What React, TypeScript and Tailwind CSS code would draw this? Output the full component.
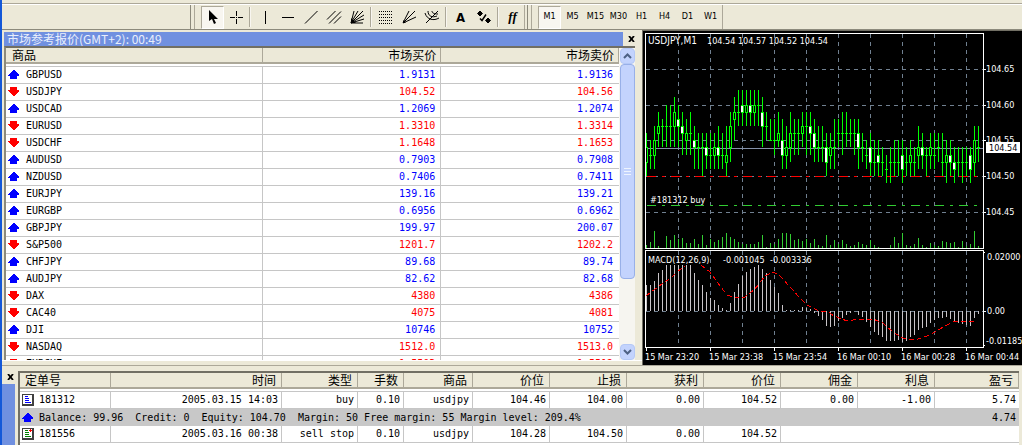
import type { ReactNode } from "react";

type Quote = { symbol: string; bid: string; ask: string; up: boolean };

const quotes: Quote[] = [
  { symbol: "GBPUSD", bid: "1.9131", ask: "1.9136", up: true },
  { symbol: "USDJPY", bid: "104.52", ask: "104.56", up: false },
  { symbol: "USDCAD", bid: "1.2069", ask: "1.2074", up: true },
  { symbol: "EURUSD", bid: "1.3310", ask: "1.3314", up: false },
  { symbol: "USDCHF", bid: "1.1648", ask: "1.1653", up: false },
  { symbol: "AUDUSD", bid: "0.7903", ask: "0.7908", up: true },
  { symbol: "NZDUSD", bid: "0.7406", ask: "0.7411", up: true },
  { symbol: "EURJPY", bid: "139.16", ask: "139.21", up: true },
  { symbol: "EURGBP", bid: "0.6956", ask: "0.6962", up: true },
  { symbol: "GBPJPY", bid: "199.97", ask: "200.07", up: true },
  { symbol: "S&P500", bid: "1201.7", ask: "1202.2", up: false },
  { symbol: "CHFJPY", bid: "89.68", ask: "89.74", up: true },
  { symbol: "AUDJPY", bid: "82.62", ask: "82.68", up: true },
  { symbol: "DAX", bid: "4380", ask: "4386", up: false },
  { symbol: "CAC40", bid: "4075", ask: "4081", up: false },
  { symbol: "DJI", bid: "10746", ask: "10752", up: true },
  { symbol: "NASDAQ", bid: "1512.0", ask: "1513.0", up: false },
  { symbol: "EURCHF", bid: "1.5503", ask: "1.5512", up: false },
];

const orderHeads = ["定单号", "时间", "类型", "手数", "商品", "价位", "止损", "获利", "价位", "佣金", "利息", "盈亏"];

const orders = [
  ["181312", "2005.03.15 14:03", "buy", "0.10", "usdjpy", "104.46", "104.00", "0.00", "104.52", "0.00", "-1.00", "5.74"],
  ["181556", "2005.03.16 00:38", "sell stop", "0.10", "usdjpy", "104.28", "104.50", "0.00", "104.52", "", "", ""],
];

// [high, low, body top, body bottom, falling] in points above 104.00
const candles: [number, number, number, number, number?][] = [
  [56, 50, 54, 52], [55, 51, 53, 53], [57, 51, 55, 53], [59, 54, 57, 56], [58, 54, 57, 57], [60, 54, 57, 57],
  [60, 54, 57, 57], [61, 54, 59, 57], [60, 54, 58, 57, 1], [59, 53, 57, 56, 1], [58, 53, 56, 55], [59, 53, 56, 56],
  [57, 51, 55, 54, 1], [56, 51, 54, 54], [56, 50, 54, 54], [56, 51, 54, 53, 1], [56, 51, 53, 53], [56, 51, 54, 53],
  [57, 51, 54, 53, 1], [56, 51, 53, 53], [57, 50, 53, 52], [59, 52, 57, 54], [61, 55, 59, 58], [62, 57, 59, 59],
  [62, 57, 60, 59, 1], [62, 57, 60, 59], [62, 57, 60, 59, 1], [62, 57, 60, 59], [62, 57, 60, 60], [61, 54, 59, 57, 1],
  [59, 55, 57, 57], [58, 55, 55, 55], [58, 53, 55, 55], [59, 54, 56, 55], [58, 51, 55, 53, 1], [57, 51, 54, 53],
  [59, 52, 56, 54], [58, 53, 56, 56], [58, 53, 56, 56], [59, 54, 57, 56], [59, 53, 57, 57], [59, 53, 57, 56, 1],
  [58, 52, 56, 54, 1], [57, 52, 54, 54], [57, 52, 54, 54], [56, 50, 54, 52, 1], [56, 51, 54, 53], [58, 51, 54, 54],
  [58, 54, 56, 56], [59, 53, 56, 56], [59, 54, 56, 56], [58, 54, 56, 56], [58, 53, 56, 56], [58, 51, 56, 54, 1],
  [56, 52, 54, 54], [55, 51, 53, 53], [56, 50, 54, 52, 1], [55, 50, 52, 52], [55, 50, 53, 52, 1], [54, 50, 52, 52],
  [53, 49, 51, 51], [54, 49, 52, 52], [55, 50, 52, 52], [55, 50, 52, 52], [55, 49, 53, 51, 1], [54, 50, 52, 52],
  [55, 50, 53, 52], [54, 50, 52, 52], [57, 51, 54, 53], [56, 51, 54, 53, 1], [54, 50, 53, 53], [56, 51, 54, 53],
  [56, 51, 53, 53], [56, 52, 54, 54], [56, 50, 52, 52], [55, 49, 53, 52], [55, 50, 53, 52, 1], [54, 49, 52, 51, 1],
  [54, 50, 52, 52], [54, 49, 52, 52], [54, 50, 52, 52], [54, 49, 53, 51, 1], [57, 50, 55, 52], [57, 52, 54, 54],
];

const volumes = [
  3, 6, 17, 2, 0, 12, 8, 13, 9, 10, 5, 5, 9, 4, 13, 3, 9, 6, 8, 11, 15, 11, 9, 6, 4, 4, 4, 4, 6, 13, 1, 5, 4, 9, 15,
  15, 14, 8, 9, 7, 9, 5, 9, 3, 2, 13, 3, 8, 4, 8, 4, 2, 3, 6, 4, 3, 8, 3, 1, 0, 0, 3, 11, 5, 15, 3, 2, 4, 10, 3, 1,
  5, 3, 2, 7, 6, 5, 6, 1, 7, 2, 4, 17, 2,
];

const macd = [
  26, 26, 30, 38, 41, 46, 46, 46, 46, 46, 46, 46, 38, 31, 26, 19, 13, 11, 6, 3, 1, 8, 19, 27, 35, 39, 42, 44, 46, 42,
  38, 31, 24, 18, 6, 1, 1, 1, 1, 4, 3, 2, -2, -5, -9, -15, -16, -15, -10, -7, -4, -2, 0, -4, -6, -11, -16, -21, -24,
  -26, -30, -30, -30, -29, -31, -30, -26, -24, -19, -17, -16, -12, -9, -7, -7, -6, -8, -11, -12, -13, -14, -15, -7, -3,
];

const gridX = [36, 68, 100, 132, 164, 196, 228, 260, 292, 324];
const prices = [
  { label: "104.65", y: 39 },
  { label: "104.60", y: 75 },
  { label: "104.55", y: 110 },
  { label: "104.50", y: 146 },
  { label: "104.45", y: 182 },
];
const times = ["15 Mar 23:20", "15 Mar 23:38", "15 Mar 23:54", "16 Mar 00:10", "16 Mar 00:28", "16 Mar 00:44"];

const priceY = (p: number) => Math.round(146 - (p - 50) * 7.15);

function Arrow({ up }: { up: boolean }) {
  return (
    <svg className="h-[10px] w-3 shrink-0" viewBox="0 0 12 10" fill={up ? "#0000ff" : "#ff0000"} shapeRendering="crispEdges">
      {up ? <path d="M5 0h1l5 5v1H9v3H2V6H0V5z" /> : <path d="M2 0h7v3h2v1L6 9H5L0 4V3h2z" />}
    </svg>
  );
}

function ToolButton({ label, active, children }: { label: string; active?: boolean; children: ReactNode }) {
  return (
    <button
      type="button"
      aria-label={label}
      className={
        active
          ? "flex h-[23px] w-[23px] items-center justify-center border border-[#aca899] border-r-white border-b-white bg-[#f8f6f0] text-[9px] text-black"
          : "flex h-[23px] w-[23px] items-center justify-center text-[9px] text-black"
      }
    >
      {children}
    </button>
  );
}

function Glyph({ children }: { children: ReactNode }) {
  return (
    <svg className="h-4 w-4 shrink-0" viewBox="0 0 16 16" fill="none" stroke="#000" strokeWidth="1">
      {children}
    </svg>
  );
}

function Divider() {
  return <span className="mx-[2px] h-5 w-[2px] border-r border-l border-r-[#f8f6f0] border-l-[#aca899]" />;
}

function Grip() {
  return (
    <span className="flex h-6 gap-[3px] px-[2px]">
      <span className="w-px bg-[#8c8a7c]" />
      <span className="w-px bg-[#aca899]" />
    </span>
  );
}

function Toolbar() {
  return (
    <header className="border-b border-[#8c8a7c]">
      <div className="h-1 border-b border-[#aca899]" />
      <div className="flex h-[25px] items-center border-t border-white pl-[186px]">
        <Grip />
        <div className="ml-1 flex items-center">
          <ToolButton label="Cursor" active>
            <Glyph>
              <path d="M4 1v11l3-2 2 5 2-1-2-4h4z" fill="#000" stroke="none" />
            </Glyph>
          </ToolButton>
          <ToolButton label="Crosshair">
            <Glyph>
              <path d="M8.500 2v5M8.500 10v5M2 8.500h5M10 8.500h5" />
              <path d="M8 8.500h1" />
            </Glyph>
          </ToolButton>
          <Divider />
          <ToolButton label="Vertical line">
            <Glyph>
              <path d="M8.500 2v13" />
            </Glyph>
          </ToolButton>
          <ToolButton label="Horizontal line">
            <Glyph>
              <path d="M2 8.500h12" />
            </Glyph>
          </ToolButton>
          <ToolButton label="Trendline">
            <Glyph>
              <path d="M2 14.500L14.500 2" />
            </Glyph>
          </ToolButton>
          <ToolButton label="Equidistant channel">
            <Glyph>
              <path d="M1 10.500L9.500 2M3 14.500L15 2.500M8 14.500l7-7" />
            </Glyph>
          </ToolButton>
          <ToolButton label="Gann fan">
            <Glyph>
              <path d="M2 14L5 2M2 14L9 2M2 14L14 2M2 14L15 6M2 14L15 10M2 14h12" />
              <path d="M2 9v5h5z" fill="#000" stroke="none" />
            </Glyph>
          </ToolButton>
          <Divider />
          <ToolButton label="Fibonacci retracement">
            <Glyph>
              <path d="M1 2.500h14M1 5.500h14M1 8.500h14M1 11.500h14M1 14.500h14" strokeDasharray="1 1" />
            </Glyph>
          </ToolButton>
          <ToolButton label="Fibonacci fan">
            <Glyph>
              <path d="M2 14L8 2M2 14L14 2M2 14L15 8" />
              <path d="M2 11v3h3z" fill="#000" stroke="none" />
            </Glyph>
          </ToolButton>
          <ToolButton label="Fibonacci arcs">
            <Glyph>
              <path d="M2 14L14 2M1 4c2 7 9 8 14 5M4 2c0 5 4 7 9 5M8 2c0 2 2 3 6 3" />
            </Glyph>
          </ToolButton>
          <Divider />
          <ToolButton label="Text">
            <span className="pt-px font-['DejaVu_Sans_Condensed',sans-serif] text-[13px] font-bold">A</span>
          </ToolButton>
          <ToolButton label="Arrows">
            <Glyph>
              <path d="M4 2l2.500 2.500L4 7 1.500 4.500zM12 9l2.500 2.500L12 14l-2.500-2.500z" fill="#000" />
              <path d="M4 9.500l2 2 4-6" strokeWidth="1.500" />
            </Glyph>
          </ToolButton>
          <Divider />
          <ToolButton label="Indicators">
            <span className="font-['Liberation_Serif',serif] text-[13px] font-bold italic">ff</span>
          </ToolButton>
        </div>
        <span className="h-6 w-px bg-[#aca899]" />
        <Grip />
        <div className="ml-1 flex items-center font-['DejaVu_Sans_Condensed',sans-serif]">
          {["M1", "M5", "M15", "M30", "H1", "H4", "D1", "W1"].map((t) => (
            <ToolButton key={t} label={t} active={t === "M1"}>
              {t}
            </ToolButton>
          ))}
        </div>
        <span className="h-6 w-px bg-[#aca899]" />
      </div>
    </header>
  );
}

function CloseButton() {
  return (
    <button type="button" aria-label="Close" className="flex h-3 w-4 shrink-0 items-center justify-center">
      <svg className="h-[6px] w-[7px]" viewBox="0 0 7 6" stroke="#000" strokeWidth="1.800">
        <path d="M1 0l5 6M6 0L1 6" />
      </svg>
    </button>
  );
}

function ScrollButton({ down }: { down?: boolean }) {
  return (
    <button
      type="button"
      aria-label={down ? "Scroll down" : "Scroll up"}
      className="flex h-4 w-[15px] shrink-0 items-center justify-center rounded-sm border border-[#b4c8f6] bg-[#c3d3fd]"
    >
      <svg className="h-[6px] w-[9px]" viewBox="0 0 9 6" fill="none" stroke="#4d6185" strokeWidth="2">
        {down ? <path d="M1 1l3.500 3.500L8 1" /> : <path d="M1 5l3.500-3.500L8 5" />}
      </svg>
    </button>
  );
}

function MarketWatch() {
  return (
    <section className="flex min-h-0 min-w-0 flex-1 flex-col overflow-hidden pt-[2px] pl-[2px]">
      <div className="flex h-[14px] shrink-0 items-center pr-[3px]">
        <h2 className="h-full min-w-0 flex-1 bg-[#7090e0] pl-[3px] font-['Noto_Sans_CJK_SC',sans-serif] text-[12px] leading-[13px] whitespace-nowrap text-[#e8eefc]">
          市场参考报价(GMT+2): 00:49
        </h2>
        <CloseButton />
      </div>
      <div className="mr-[7px] flex min-h-0 flex-1 border-t-2 border-l-2 border-t-[#716f64] border-l-[#8c8a7c]">
        <div className="min-w-0 flex-1">
          <table className="w-full table-fixed border-separate border-spacing-0 bg-white">
            <colgroup>
              <col className="w-[42%]" />
              <col className="w-[29%]" />
              <col className="w-[29%]" />
            </colgroup>
            <thead>
              <tr className="h-4 bg-[#ece9d8] font-['Noto_Sans_CJK_SC',sans-serif] text-[12px] leading-[14px] text-black">
                <th className="border-r border-b-2 border-[#aca899] px-[6px] py-0 text-left font-normal">商品</th>
                <th className="border-r border-b-2 border-[#aca899] px-1 py-0 text-right font-normal">市场买价</th>
                <th className="border-r border-b-2 border-[#aca899] px-1 py-0 text-right font-normal">市场卖价</th>
              </tr>
              <tr className="h-[3px]">
                <td colSpan={3} className="border-b border-[#c6c6c6] p-0" />
              </tr>
            </thead>
            <tbody className="font-['DejaVu_Sans_Mono',monospace] text-[10px] leading-4">
              {quotes.map((q) => (
                <tr key={q.symbol} className={q.up ? "h-[17px] text-[#0000ff]" : "h-[17px] text-[#ff0000]"}>
                  <td className="border-r border-b border-[#c6c6c6] py-0 pr-0 pl-[2px] text-black">
                    <span className="flex items-center gap-[6px]">
                      <Arrow up={q.up} />
                      {q.symbol}
                    </span>
                  </td>
                  <td className="border-r border-b border-[#c6c6c6] py-0 pr-[5px] pl-0 text-right">{q.bid}</td>
                  <td className="border-b border-[#c6c6c6] py-0 pr-[6px] pl-0 text-right">{q.ask}</td>
                </tr>
              ))}
            </tbody>
          </table>
        </div>
        <div className="flex w-4 shrink-0 flex-col items-center bg-[#f6f5f0]">
          <ScrollButton />
          <div className="flex w-[15px] flex-[214] items-center justify-center rounded-sm border border-[#98b0e8] bg-[#c3d3fd]">
            <span className="h-[7px] w-[7px] border-y border-[#eef4fe]">
              <span className="mt-[2px] block h-px bg-[#eef4fe]" />
            </span>
          </div>
          <div className="flex-[65]" />
          <ScrollButton down />
        </div>
      </div>
    </section>
  );
}

function Chart() {
  return (
    <svg
      className="block w-full border-t border-l border-[#716f64] bg-black font-['DejaVu_Sans_Condensed',sans-serif] text-[9px]"
      viewBox="3 1 379 334"
      fill="#fff"
      role="img"
      aria-label="USDJPY,M1"
    >
      <g stroke="#708090" strokeDasharray="4 4" shapeRendering="crispEdges">
        {gridX.map((x) => (
          <path key={x} d={`M${x + 2.5} 4v214M${x + 2.5} 221v95`} />
        ))}
        {prices.map((p) => (
          <path key={p.label} d={`M6 ${p.y + 0.5}h337`} />
        ))}
        <path d="M6 281.500h337" />
      </g>
      <path d="M6 118.500h337" stroke="#8490a8" shapeRendering="crispEdges" />
      <path d="M7 146.500h336" stroke="#ff0000" strokeDasharray="9 6 3 6" shapeRendering="crispEdges" />
      <path d="M7 175.500h336" stroke="#32cd32" strokeDasharray="9 6 3 6" shapeRendering="crispEdges" />

      {/* volumes */}
      {volumes.map((v, i) => (
        <rect key={i} x={6 + i * 4} y={218 - v} width="1" height={v} fill="#32cd32" />
      ))}

      {/* candles */}
      {candles.map(([high, low, top, bottom, falling], i) => {
        const x = 6 + i * 4;
        const y = priceY(top);
        return (
          <g key={i}>
            <rect x={x} y={priceY(high)} width="1" height={priceY(low) - priceY(high)} fill="#00ff00" />
            {top === bottom ? (
              <rect x={x - 1} y={y} width="3" height="1" fill="#00ff00" />
            ) : (
              <>
                <rect x={x - 1} y={y} width="3" height={priceY(bottom) - y + 1} fill="#00ff00" />
                <rect x={x} y={y + 1} width="1" height={priceY(bottom) - y - 1} fill={falling ? "#fff" : "#000"} />
                {falling && <rect x={x - 1} y={y + 1} width="2" height={priceY(bottom) - y - 1} />}
              </>
            )}
          </g>
        );
      })}

      {/* MACD */}
      {macd.map((m, i) => (
        <rect key={i} x={6 + i * 4} y={m > 0 ? 281 - m : 281} width="1" height={Math.abs(m)} fill="#c8c4c8" />
      ))}
      <path
        d="M6 266L22 254L32 247L38 241L45 236M61 235L70 242L78 253L87 265L95 268L105 267L115 259L125 246L133 242L140 246L150 257L160 268L167 275L177 280L190 283L194 286L207 291L220 289L233 289L243 293L253 302L263 308L275 310L290 305L303 297L313 292L335 291"
        fill="none"
        stroke="#ff0000"
        strokeDasharray="5 3"
        shapeRendering="crispEdges"
      />

      {/* frames and ticks */}
      <g fill="none" stroke="#fff" shapeRendering="crispEdges">
        <path d="M5.500 3.500h338v215h-338zM5.500 220.500h338v97h-338z" />
        {prices.map((p) => (
          <path key={p.label} d={`M343 ${p.y + 0.5}h3`} />
        ))}
        <path d="M343 281.500h3M343 222.500h2M343 315.500h2" />
        {times.map((t, i) => (
          <path key={t} d={`M${6.5 + i * 64} 318v3`} />
        ))}
      </g>

      <text x="8" y="14" className="text-[10px]">
        USDJPY,M1
      </text>
      <text x="67" y="14">104.54 104.57 104.52 104.54</text>
      <text x="10" y="173">#181312 buy</text>
      <text x="8" y="233">MACD(12,26,9)</text>
      <text x="83" y="233">-0.001045</text>
      <text x="130" y="233">-0.003336</text>
      {prices.map((p) => (
        <text key={p.label} x="346" y={p.y + 3}>
          {p.label}
        </text>
      ))}
      <rect x="346" y="112" width="34" height="11" />
      <text x="349" y="121" fill="#000">104.54</text>
      <text x="347" y="230">0.02000</text>
      <text x="347" y="284">0.00</text>
      <text x="346" y="314">-0.01185</text>
      {times.map((t, i) => (
        <text key={t} x={5 + i * 64} y="330">
          {t}
        </text>
      ))}
    </svg>
  );
}

function OrderIcon({ pending }: { pending: boolean }) {
  return (
    <svg className="h-3 w-3 shrink-0" viewBox="0 0 12 12">
      <path d="M0 0h12v12H0z" fill="#404040" />
      <path d="M1 1h9v9H1z" fill="#fff" />
      <path d="M3 2h3v1H3zM3 4h4v1H3zM3 6h4v1H3zM3 8h6v1H3z" fill={pending ? "#008000" : "#0000ff"} />
      {pending && <path d="M7 2h3v1H7zM8 1h1v3H8z" fill="#ff0000" />}
    </svg>
  );
}

function OrderRow({ order }: { order: string[] }) {
  return (
    <tr className="h-[17px] bg-white">
      {order.map((cell, i) =>
        i === 0 ? (
          <td key={i} className="border-r border-b border-[#c6c6c6] py-0 pr-0 pl-[2px]">
            <span className="flex items-center gap-[5px]">
              <OrderIcon pending={order[2] !== "buy"} />
              {cell}
            </span>
          </td>
        ) : (
          <td
            key={i}
            className={
              cell && i < 11
                ? "border-r border-b border-[#c6c6c6] py-0 pr-[3px] pl-0 text-right"
                : "border-b border-[#c6c6c6] py-0 pr-[3px] pl-0 text-right"
            }
          >
            {cell}
          </td>
        ),
      )}
    </tr>
  );
}

function Terminal() {
  return (
    <section className="flex flex-1 border-t border-[#aca899] pt-[5px]">
      <div className="flex w-4 shrink-0 flex-col">
        <CloseButton />
        <div className="mt-px mr-[3px] flex-1 bg-[#7090e0]" />
      </div>
      <div className="mr-[3px] min-w-0 flex-1 border-t-2 border-l-2 border-[#716f64] bg-white">
        <table className="w-full table-fixed border-separate border-spacing-0 text-black">
          <colgroup>
            <col className="w-[91px]" />
            <col />
            <col className="w-[76px]" />
            <col className="w-[46px]" />
            <col className="w-[69px]" />
            <col className="w-[77px]" />
            <col className="w-[77px]" />
            <col className="w-[77px]" />
            <col className="w-[77px]" />
            <col className="w-[77px]" />
            <col className="w-[77px]" />
            <col className="w-[84px]" />
          </colgroup>
          <thead>
            <tr className="h-4 bg-[#ece9d8] font-['Noto_Sans_CJK_SC',sans-serif] text-[12px] leading-[14px]">
              {orderHeads.map((h, i) => (
                <th
                  key={i}
                  className={
                    i === 0
                      ? "border-r border-b-2 border-[#aca899] px-[5px] py-0 text-left font-normal"
                      : "border-r border-b-2 border-[#aca899] px-[5px] py-0 text-right font-normal"
                  }
                >
                  {h}
                </th>
              ))}
            </tr>
            <tr className="h-[3px]">
              <td colSpan={12} className="border-b border-[#c6c6c6] p-0" />
            </tr>
          </thead>
          <tbody className="font-['DejaVu_Sans_Mono',monospace] text-[10px] leading-4">
            <OrderRow order={orders[0]} />
            <tr className="h-[17px] bg-[#c8c8c8]">
              <td colSpan={11} className="py-0 pr-0 pl-[2px]">
                <span className="flex items-center gap-[5px] whitespace-pre">
                  <Arrow up />
                  {"Balance: 99.96  Credit: 0  Equity: 104.70  Margin: 50 Free margin: 55 Margin level: 209.4%"}
                </span>
              </td>
              <td className="py-0 pr-[3px] pl-0 text-right">4.74</td>
            </tr>
            <OrderRow order={orders[1]} />
          </tbody>
        </table>
      </div>
    </section>
  );
}

export default function App() {
  return (
    <main className="flex min-h-screen flex-col border-l-2 border-[#1458d8] bg-[#ece9d8]">
      <Toolbar />
      <div className="grid grid-cols-[640fr_380fr]">
        {/* Market watch takes the chart's height */}
        <div className="flex h-0 min-h-full min-w-0 flex-col">
          <MarketWatch />
          <div className="h-[5px] shrink-0 border-t border-white" />
        </div>
        <Chart />
      </div>
      <Terminal />
    </main>
  );
}
